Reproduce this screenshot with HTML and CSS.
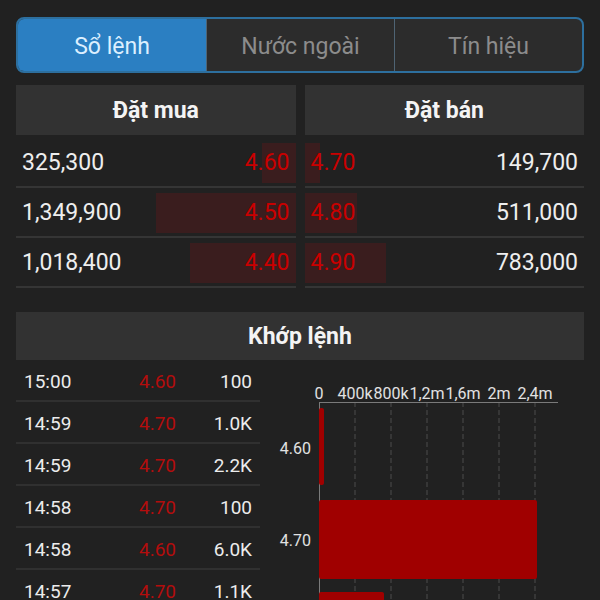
FILE: index.html
```html
<!DOCTYPE html>
<html lang="vi">
  <head>
    <meta charset="UTF-8" />
    <title>Sổ lệnh</title>
    <link rel="stylesheet" href="styles.css" />
  </head>
  <body>
    <div class="screen">
      <div class="tabs">
        <div class="tab active">Sổ lệnh</div>
        <div class="tab">Nước ngoài</div>
        <div class="tab">Tín hiệu</div>
      </div>

      <div class="book">
        <div class="side buy">
          <div class="side-head">Đặt mua</div>
          <div class="level">
            <span class="depth" style="width: 12.05%"></span>
            <span class="vol">325,300</span>
            <span class="price">4.60</span>
          </div>
          <div class="level">
            <span class="depth" style="width: 50%"></span>
            <span class="vol">1,349,900</span>
            <span class="price">4.50</span>
          </div>
          <div class="level">
            <span class="depth" style="width: 37.72%"></span>
            <span class="vol">1,018,400</span>
            <span class="price">4.40</span>
          </div>
        </div>

        <div class="side sell">
          <div class="side-head">Đặt bán</div>
          <div class="level">
            <span class="depth" style="width: 5.54%"></span>
            <span class="price">4.70</span>
            <span class="vol">149,700</span>
          </div>
          <div class="level">
            <span class="depth" style="width: 18.93%"></span>
            <span class="price">4.80</span>
            <span class="vol">511,000</span>
          </div>
          <div class="level">
            <span class="depth" style="width: 29%"></span>
            <span class="price">4.90</span>
            <span class="vol">783,000</span>
          </div>
        </div>
      </div>

      <div class="match-head">Khớp lệnh</div>

      <div class="match">
        <div class="trades">
          <div class="trade"><span>15:00</span><span class="price">4.60</span><span class="qty">100</span></div>
          <div class="trade"><span>14:59</span><span class="price">4.70</span><span class="qty">1.0K</span></div>
          <div class="trade"><span>14:59</span><span class="price">4.70</span><span class="qty">2.2K</span></div>
          <div class="trade"><span>14:58</span><span class="price">4.70</span><span class="qty">100</span></div>
          <div class="trade"><span>14:58</span><span class="price">4.60</span><span class="qty">6.0K</span></div>
          <div class="trade"><span>14:57</span><span class="price">4.70</span><span class="qty">1.1K</span></div>
          <div class="trade"><span>14:57</span><span class="price">4.70</span><span class="qty">500</span></div>
        </div>

        <svg class="chart" width="323" height="300" viewBox="0 0 323 300">
          <g class="ticks">
            <text x="59" y="39">0</text>
            <text x="95" y="39">400k</text>
            <text x="131" y="39">800k</text>
            <text x="167" y="39">1,2m</text>
            <text x="203" y="39">1,6m</text>
            <text x="239" y="39">2m</text>
            <text x="275" y="39">2,4m</text>
          </g>
          <g class="grid">
            <line x1="95" y1="42" x2="95" y2="300" />
            <line x1="131" y1="42" x2="131" y2="300" />
            <line x1="167" y1="42" x2="167" y2="300" />
            <line x1="203" y1="42" x2="203" y2="300" />
            <line x1="239" y1="42" x2="239" y2="300" />
            <line x1="275" y1="42" x2="275" y2="300" />
          </g>
          <line class="axis" x1="59" y1="42.5" x2="298" y2="42.5" />
          <line class="axis" x1="59.5" y1="42" x2="59.5" y2="300" />
          <g class="bars">
            <rect x="59" y="48" width="5" height="77" rx="2" />
            <rect x="59" y="140" width="218" height="79" rx="2" />
            <rect x="59" y="232" width="65" height="79" rx="2" />
          </g>
          <g class="labels">
            <text x="51" y="94">4.60</text>
            <text x="51" y="186">4.70</text>
            <text x="51" y="278">4.50</text>
          </g>
        </svg>
      </div>
    </div>
  </body>
</html>
```

FILE: styles.css
```css
html {
  box-sizing: border-box;
  background: #212121;
}

*,
*:before,
*:after {
  box-sizing: inherit;
}

body {
  margin: 0;
  height: 600px;
  overflow: hidden;
  font-family: Roboto, "Noto Sans", sans-serif;
  color: #eeeeee;
}

.screen {
  padding: 17px 16px 0;
}

/* tabs */
.tabs {
  display: grid;
  grid-template-columns: repeat(3, 1fr);
  height: 56px;
  border: 2px solid #2d6f9e;
  border-radius: 8px;
  overflow: hidden;
  background: #2c2c2c;
}

.tab {
  display: flex;
  align-items: center;
  justify-content: center;
  padding-top: 2px;
  font-size: 23px;
  color: #8c8c8c;
  border-left: 1px solid #4f6474;
}

.tab:first-child {
  border-left: 0;
}

.tab.active {
  background: #2b7fc2;
  color: #dcefff;
}

/* order book */
.book {
  display: grid;
  grid-template-columns: 1fr 1fr;
  column-gap: 9px;
  margin-top: 12px;
}

.side-head,
.match-head {
  display: flex;
  align-items: center;
  justify-content: center;
  height: 50px;
  background: #323232;
  font-size: 23px;
  font-weight: bold;
  color: #f4f4f4;
}

.side-head {
  margin-bottom: 3px;
}

.level {
  position: relative;
  display: flex;
  align-items: center;
  justify-content: space-between;
  height: 50px;
  padding: 1px 6px 0;
  border-bottom: 2px solid #353535;
  font-size: 23px;
}

.level span {
  position: relative;
}

.level .depth {
  position: absolute;
  top: 5px;
  bottom: 3px;
  background: #3a1d1e;
}

.buy .depth {
  right: 0;
}

.sell .depth {
  left: 0;
}

.level .price {
  color: #c90000;
}

/* matched orders */
.match-head {
  margin-top: 24px;
  height: 48px;
}

.match {
  display: flex;
  align-items: flex-start;
}

.trades {
  width: 244px;
  flex-shrink: 0;
}

.trade {
  display: grid;
  grid-template-columns: 1fr 60px 76px;
  align-items: center;
  height: 42px;
  padding: 3px 8px 0;
  border-bottom: 2px solid #303030;
  font-size: 19px;
  color: #ececec;
}

.trade .price,
.trade .qty {
  text-align: right;
}

.trade .price {
  color: #b30d0d;
}

.chart {
  display: block;
  flex-shrink: 0;
  font-family: Roboto, "Noto Sans", sans-serif;
}

.ticks text {
  font-size: 16px;
  fill: #e2e2e2;
  text-anchor: middle;
}

.labels text {
  font-size: 16px;
  fill: #e2e2e2;
  text-anchor: end;
}

.grid line {
  stroke: #4c4c4c;
  stroke-width: 1;
  stroke-dasharray: 5 3;
}

.axis {
  stroke: #7a7a7a;
  stroke-width: 1;
}

.bars rect {
  fill: #a00000;
}
```
